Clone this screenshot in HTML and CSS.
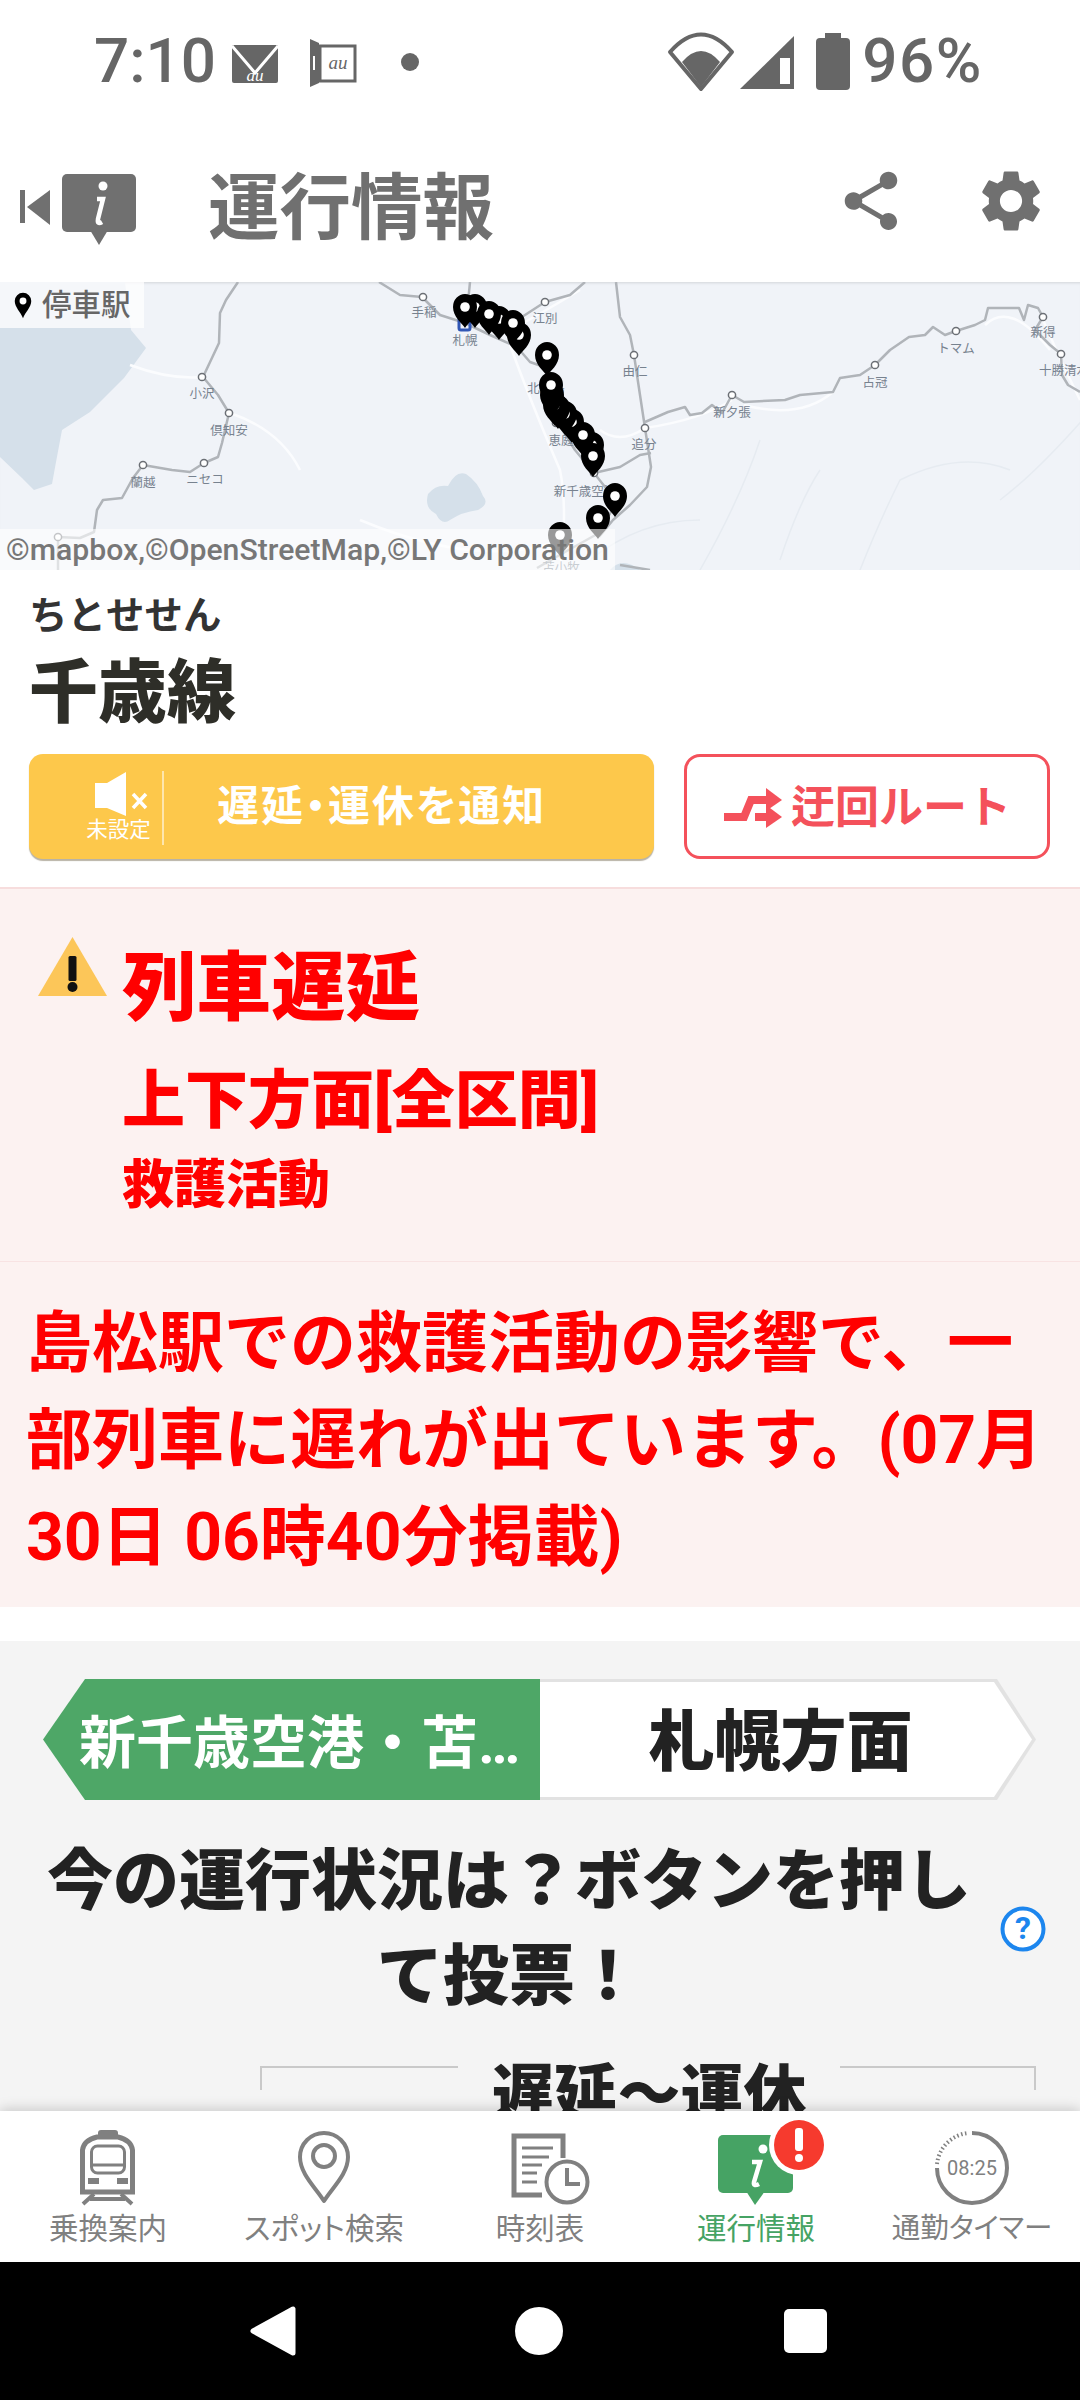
FILE: index.html
```html
<!DOCTYPE html>
<html lang="ja">
<head>
<meta charset="utf-8">
<title>運行情報</title>
<link rel="stylesheet" href="styles.css">
</head>
<body>
<div class="page">
  <div class="status">
    <span class="time">7:10</span>
    <svg class="st-mail" viewBox="233 45 46 38"><rect x="233" y="45" width="46" height="38" rx="2" fill="#666"/><path d="M233 46L256 73L279 46" fill="none" stroke="#fff" stroke-width="3"/><text x="256" y="81" class="au-w" text-anchor="middle">au</text></svg>
    <svg class="st-dev" viewBox="311 38 48 50"><path d="M311 39L320 43V83L311 87Z" fill="#666"/><rect x="321" y="46" width="35" height="35" fill="#fff" stroke="#666" stroke-width="3"/><rect x="314" y="56" width="2" height="14" fill="#fff"/><text x="339" y="69" class="au-g" text-anchor="middle">au</text></svg>
    <span class="st-dot"></span>
    <span class="st-spacer"></span>
    <svg class="st-wifi" viewBox="667 32 68 60"><path d="M670 52Q701 17 732 52L701 89Z" fill="#fff" stroke="#666" stroke-width="4" stroke-linejoin="round"/><path d="M682 62Q701 40 720 62L701 87Z" fill="#666"/></svg>
    <svg class="st-sig" viewBox="740 36 54 54"><path d="M740 89L794 36V89Z" fill="#666"/><rect x="780" y="58" width="10" height="26" fill="#fff"/></svg>
    <svg class="st-bat" viewBox="816 33 34 58"><rect x="825" y="33" width="16" height="8" fill="#666"/><rect x="816" y="38" width="34" height="52" rx="4" fill="#666"/></svg>
    <span class="pct">96%</span>
  </div>

  <header class="appbar">
    <svg class="ab-logo" viewBox="18 168 120 74"><rect x="20" y="186" width="5" height="33" fill="#707070"/><path d="M27 203L50 186V221Z" fill="#707070"/><rect x="62" y="170" width="74" height="58" rx="5" fill="#707070"/><path d="M90 226H108L99 241Z" fill="#707070"/><circle cx="103" cy="182" r="4.5" fill="#fff"/><path d="M97 195H103L98 215Q97 221 102 218" fill="none" stroke="#fff" stroke-width="4.5"/></svg>
    <h1 class="ab-title">運行情報</h1>
    <svg class="ab-share" viewBox="0 0 24 24"><path fill="#707070" d="M18 16.08c-.76 0-1.44.3-1.96.77L8.91 12.7c.05-.23.09-.46.09-.7s-.04-.47-.09-.7l7.05-4.11c.54.5 1.25.81 2.04.81 1.66 0 3-1.34 3-3s-1.34-3-3-3-3 1.34-3 3c0 .24.04.47.09.7L8.04 9.81C7.5 9.31 6.79 9 6 9c-1.66 0-3 1.34-3 3s1.34 3 3 3c.79 0 1.5-.31 2.04-.81l7.12 4.16c-.05.21-.08.43-.08.65 0 1.61 1.31 2.92 2.92 2.92s2.92-1.31 2.92-2.92-1.31-2.92-2.92-2.92z"/></svg>
    <svg class="ab-gear" viewBox="0 0 24 24"><path fill="#707070" d="M19.14,12.94c.04-.3.06-.61.06-.94 0-.32-.02-.64-.07-.94l2.03-1.58c.18-.14.23-.41.12-.61l-1.92-3.32c-.12-.22-.37-.29-.59-.22l-2.39.96c-.5-.38-1.03-.7-1.62-.94l-.36-2.54c-.04-.24-.24-.41-.48-.41h-3.84c-.24 0-.43.17-.47.41l-.36 2.54c-.59.24-1.13.57-1.62.94l-2.39-.96c-.22-.08-.47 0-.59.22L2.74 8.87c-.12.21-.08.47.12.61l2.03 1.58c-.05.3-.09.63-.09.94s.02.64.07.94l-2.03 1.58c-.18.14-.23.41-.12.61l1.92 3.32c.12.22.37.29.59.22l2.39-.96c.5.38 1.03.7 1.62.94l.36 2.54c.05.24.24.41.48.41h3.84c.24 0 .44-.17.47-.41l.36-2.54c.59-.24 1.13-.56 1.62-.94l2.39.96c.22.08.47 0 .59-.22l1.92-3.32c.12-.22.07-.47-.12-.61l-2.01-1.58zM12 15.6c-1.98 0-3.6-1.62-3.6-3.6s1.62-3.6 3.6-3.6 3.6 1.62 3.6 3.6-1.62 3.6-3.6 3.6z"/></svg>
  </header>

  <section class="map">
    <svg class="map-svg" viewBox="0 282 1080 288">
      <defs>
        <g id="pin"><path d="M0 21C-3 16-12 10-12 0A12 13 0 1 1 12 0C12 10 3 16 0 21Z" fill="#000"/><circle r="4.800" fill="#fff"/></g>
      </defs>
      <path class="water" d="M0 282V457L22 478L34 490L52 484L56 462L62 430L90 412L124 378L146 348L131 330L125 282Z"/>
      <path class="water" d="M428 494Q436 484 448 486Q456 470 466 474Q478 482 483 496Q490 504 478 510Q462 512 450 520Q442 526 436 514Q424 508 428 494Z"/>
      <path class="water" d="M610 570Q622 556 640 570Z"/>
      <path class="road" d="M130 365Q170 380 203 377M230 413Q280 430 300 470M510 345Q530 400 560 470Q568 510 560 570M600 430Q620 445 645 428M645 428Q700 420 732 400M744 405Q800 420 833 392M985 325Q1010 300 1050 350M1043 320Q1060 360 1080 400M580 290Q530 320 510 330M360 520Q480 570 560 540"/>
      <path class="lane" d="M590 560Q640 520 700 520M760 440Q740 500 700 570M1100 400Q1040 470 1000 500M780 560Q800 500 820 470M860 570Q880 520 900 480Q960 450 1010 470"/>
      <g class="rails">
        <path d="M238 282L226 300L220 313L219 343L203 377L218 395L229 413L222 443L218 457L204 463L190 472L172 470L143 465L133 478L122 498L103 500L97 510L94 532L80 538L58 537L58 570"/>
        <path d="M379 282L400 295L422 297L440 315L465 323L490 335L517 347L530 362L547 368L552 395L558 423L575 450L594 473L613 497L612 510L599 533L565 552L537 568"/>
        <path d="M585 282L570 295L545 302L525 315L496 333"/>
        <path d="M470 282L466 323"/>
        <path d="M616 282L620 317L630 335L634 355L640 395L645 428L651 467L647 487L630 505L613 520L599 537"/>
        <path d="M594 473L620 467L640 455L651 453"/>
        <path d="M645 422L668 412L685 407L690 415L702 413L712 405L722 413L732 395L744 402L785 400L800 395L833 392L840 378L860 375L875 365L890 350L909 337L925 335L933 327L945 335L956 331L975 325L985 320L988 308L1019 308L1024 320L1028 305L1038 308L1043 317L1035 330L1050 345L1061 354L1062 375L1068 385L1080 392"/>
        <path d="M620 565L650 570"/>
      </g>
      <g class="stn">
        <circle cx="423" cy="297" r="3.6"/><circle cx="545" cy="302" r="3.6"/><circle cx="634" cy="355" r="3.6"/><circle cx="202" cy="377" r="3.6"/><circle cx="229" cy="413" r="3.6"/><circle cx="204" cy="463" r="3.6"/><circle cx="143" cy="465" r="3.6"/><circle cx="645" cy="428" r="3.6"/><circle cx="732" cy="395" r="3.6"/><circle cx="875" cy="365" r="3.6"/><circle cx="956" cy="331" r="3.6"/><circle cx="1043" cy="317" r="3.6"/><circle cx="1061" cy="354" r="3.6"/><circle cx="594" cy="473" r="3.6"/><circle cx="556" cy="423" r="3.6"/><circle cx="58" cy="537" r="3.6"/>
      </g>
      <rect x="459" y="318" width="11" height="12" rx="2" class="sap"/>
      <g class="lbl" text-anchor="middle">
        <text x="424" y="317">手稲</text><text x="465" y="345">札幌</text><text x="545" y="323">江別</text><text x="635" y="376">由仁</text><text x="202" y="398">小沢</text><text x="229" y="435">倶知安</text><text x="143" y="487">蘭越</text><text x="205" y="484">ニセコ</text><text x="546" y="393">北広島</text><text x="561" y="445">恵庭</text><text x="644" y="449">追分</text><text x="732" y="417">新夕張</text><text x="875" y="387">占冠</text><text x="956" y="353">トマム</text><text x="1043" y="337">新得</text><text x="1064" y="375">十勝清水</text><text x="585" y="496">新千歳空港</text><text x="561" y="572">苫小牧</text>
      </g>
      <use href="#pin" x="475" y="307"/><use href="#pin" x="465" y="307"/><use href="#pin" x="499" y="319"/><use href="#pin" x="489" y="314"/><use href="#pin" x="519" y="335"/><use href="#pin" x="513" y="323"/><use href="#pin" x="547" y="355"/><use href="#pin" x="592" y="445"/><use href="#pin" x="572" y="422"/><use href="#pin" x="565" y="414"/><use href="#pin" x="558" y="408"/><use href="#pin" x="555" y="405"/><use href="#pin" x="552" y="395"/><use href="#pin" x="551" y="385"/><use href="#pin" x="583" y="435"/><use href="#pin" x="593" y="456"/><use href="#pin" x="615" y="496"/><use href="#pin" x="598" y="518"/><use href="#pin" x="560" y="535"/>
    </svg>
    <div class="legend">
      <svg class="legend-pin" viewBox="-12 -12 24 36"><path d="M0 23C-3 15-11 8-11 0A11 11 0 1 1 11 0C11 8 3 15 0 23Z" fill="#000"/><circle r="4.6" fill="#fff"/></svg>
      <span>停車駅</span>
    </div>
    <div class="attr">©mapbox,©OpenStreetMap,©LY Corporation</div>
  </section>

  <section class="line-info">
    <div class="kana">ちとせせん</div>
    <div class="line-name">千歳線</div>
    <div class="actions">
      <button class="notify">
        <span class="mute">
          <svg class="mute-ic" viewBox="90 768 60 46"><path d="M94 780H106L125 769V813L106 805H94Z" fill="#fff"/><path d="M132 791L145 805M145 791L132 805" stroke="#fff" stroke-width="3.5"/></svg>
          <span class="mute-txt">未設定</span>
        </span>
        <span class="notify-txt">遅延・運休を通知</span>
      </button>
      <button class="route">
        <svg class="route-ic" viewBox="722 788 60 42"><path d="M723 819H743L750 802H768" fill="none" stroke="#f4515b" stroke-width="8"/><path d="M765 790L781 802L765 813Z" fill="#f4515b"/><path d="M754 819H768" fill="none" stroke="#f4515b" stroke-width="8"/><path d="M765 807L781 819L765 830Z" fill="#f4515b"/></svg>
        <span class="route-txt">迂回ルート</span>
      </button>
    </div>
  </section>

  <section class="alert">
    <div class="alert-head">
      <svg class="warn" viewBox="38 938 70 60"><path d="M72.500 938L107 997H38Z" fill="#fcc659"/><rect x="68.500" y="957" width="8" height="25" rx="1.500" fill="#111"/><circle cx="72.500" cy="988" r="5" fill="#111"/></svg>
      <div class="alert-titles">
        <div class="a-title">列車遅延</div>
        <div class="a-sub">上下方面[全区間]</div>
        <div class="a-cause">救護活動</div>
      </div>
    </div>
    <p class="alert-body">島松駅での救護活動の影響で、一部列車に遅れが出ています。(07月30日 06時40分掲載)</p>
  </section>

  <section class="vote">
    <div class="dir-tabs">
      <div class="dir dir-on"><span class="dir-on-txt">新千歳空港・苫小牧方面</span></div>
      <div class="dir dir-off"><div class="dir-off-in">札幌方面</div></div>
    </div>
    <div class="vote-q">
      <h2 class="vote-h">今の運行状況は？ボタンを押して投票！</h2>
      <svg class="help" viewBox="0 0 46 46"><circle cx="23" cy="23" r="20.500" fill="#fff" stroke="#1c86ee" stroke-width="4"/><text x="23" y="33" class="help-t" text-anchor="middle">?</text></svg>
    </div>
    <div class="bracket">
      <div class="bracket-t">遅延～運休</div>
    </div>
  </section>

  <nav class="tabs">
    <div class="tab">
      <svg class="tab-ic" viewBox="38 2128 140 80"><rect x="98" y="2130" width="20" height="8" rx="3" fill="#808080"/><path d="M82.500 2150Q84 2140 97 2137H118Q131 2140 132.500 2150V2192H82.500Z" fill="#fff" stroke="#808080" stroke-width="5"/><rect x="91.500" y="2146" width="33" height="27" rx="6" fill="#fff" stroke="#808080" stroke-width="3"/><path d="M91 2165H125" stroke="#808080" stroke-width="3" fill="none"/><rect x="88" y="2178" width="11" height="6" fill="#808080"/><rect x="117" y="2178" width="11" height="6" fill="#808080"/><path d="M94 2194L83 2204M121 2194L132 2204M90 2199H125" stroke="#808080" stroke-width="4" fill="none"/></svg>
      <span class="tab-l">乗換案内</span>
    </div>
    <div class="tab">
      <svg class="tab-ic" viewBox="254 2128 140 80"><path d="M324 2201C316 2188 300 2174 300 2157A24 24 0 1 1 348 2157C348 2174 332 2188 324 2201Z" fill="none" stroke="#808080" stroke-width="4" stroke-linejoin="round"/><circle cx="324" cy="2156" r="11" fill="none" stroke="#808080" stroke-width="4"/></svg>
      <span class="tab-l">スポット検索</span>
    </div>
    <div class="tab">
      <svg class="tab-ic" viewBox="470 2128 140 80"><path d="M563 2158V2136H514V2195H542" fill="none" stroke="#808080" stroke-width="5"/><path d="M522 2148H553M522 2157H549M522 2165H542M522 2173H537M522 2182H537" stroke="#808080" stroke-width="3" fill="none"/><circle cx="567" cy="2182" r="20.500" fill="#fff" stroke="#808080" stroke-width="4"/><path d="M567 2168V2184H580" fill="none" stroke="#808080" stroke-width="4"/></svg>
      <span class="tab-l">時刻表</span>
    </div>
    <div class="tab">
      <svg class="tab-ic" viewBox="686 2128 140 80"><rect x="718" y="2135" width="75" height="58" rx="5" fill="#46a364"/><path d="M746 2191H765L755 2205Z" fill="#46a364"/><circle cx="763" cy="2149" r="4.500" fill="#fff"/><path d="M752 2162H760L754 2182Q753 2187 759 2184" fill="none" stroke="#fff" stroke-width="4.500"/><circle cx="799" cy="2145" r="30" fill="#fff"/><circle cx="799" cy="2145" r="25" fill="#f63a2e"/><rect x="795" y="2128" width="8" height="23" rx="3" fill="#fff"/><circle cx="799" cy="2158" r="4" fill="#fff"/></svg>
      <span class="tab-l tab-on">運行情報</span>
    </div>
    <div class="tab">
      <svg class="tab-ic" viewBox="902 2128 140 80"><path d="M972 2133A35 35 0 1 1 937 2168" fill="none" stroke="#808080" stroke-width="4"/><path d="M937 2164A35 35 0 0 1 968 2133" fill="none" stroke="#808080" stroke-width="4" stroke-dasharray="1.500 2.500"/><text x="972" y="2175" class="tm" text-anchor="middle">08:25</text></svg>
      <span class="tab-l tab-narrow">通勤タイマー</span>
    </div>
  </nav>

  <div class="sysnav">
    <svg class="sn-back" viewBox="250 2306 46 50"><path d="M293 2309V2353L253 2331Z" fill="#fff" stroke="#fff" stroke-width="5" stroke-linejoin="round"/></svg>
    <span class="sn-home"></span>
    <span class="sn-rec"></span>
  </div>
</div>
</body>
</html>
```

FILE: styles.css
```css
* { box-sizing: border-box; }
html, body { margin: 0; padding: 0; background: #fff; }
body { font-family: Roboto, "Noto Sans CJK JP", sans-serif; }
.page { width: 1080px; height: 2400px; display: flex; flex-direction: column; overflow: hidden; }
h1, h2, p { margin: 0; }

/* status bar */
.status { height: 135px; flex: none; display: flex; align-items: flex-start; padding: 0 97px 0 94px; color: #666; }
.time { font-size: 62px; font-weight: 500; line-height: 70px; margin-top: 26px; margin-right: 16px; }
.pct { font-size: 62px; font-weight: 500; line-height: 70px; margin-top: 26px; margin-left: 12px; letter-spacing: 1.500px; }
.st-mail { width: 46px; height: 38px; margin-top: 45px; }
.st-dev { width: 48px; height: 50px; margin: 38px 0 0 32px; }
.st-dot { width: 18px; height: 18px; border-radius: 50%; background: #666; margin: 53px 0 0 43px; }
.st-spacer { flex: 1; }
.st-wifi { width: 68px; height: 60px; margin-top: 32px; }
.st-sig { width: 54px; height: 54px; margin: 36px 0 0 5px; }
.st-bat { width: 34px; height: 58px; margin: 33px 0 0 22px; }
.au-w { font: italic 17px "Liberation Serif", serif; fill: #fff; }
.au-g { font: italic 19px "Liberation Serif", serif; fill: #666; }

/* app bar */
.appbar { height: 147px; flex: none; display: flex; align-items: center; padding: 0 0 0 18px; position: relative; z-index: 2; }
.ab-logo { width: 120px; height: 74px; margin-top: 1px; }
.ab-title { font-size: 71.500px; font-weight: 700; color: #707070; line-height: 90px; margin: 0 0 0 70px; flex: 1; }
.ab-share { width: 70px; height: 70px; margin: 0 68px 15px 0; }
.ab-gear { width: 74px; height: 74px; margin: 0 32px 15px 0; }

/* map */
.map { height: 288px; flex: none; position: relative; overflow: hidden; background: #f0f3f8; box-shadow: inset 0 3px 3px -2px rgba(0,0,0,.12); }
.map-svg { display: block; width: 1080px; height: 288px; }
.water { fill: #d5e0ea; }
.road { fill: none; stroke: #fbfcfe; stroke-width: 2.500; }
.lane { fill: none; stroke: #e6ebf1; stroke-width: 1.500; }
.rails path { fill: none; stroke: #b0b4b9; stroke-width: 2.500; stroke-linejoin: round; }
.stn circle { fill: #fff; stroke: #6b6f75; stroke-width: 1.500; }
.sap { fill: none; stroke: #3157b5; stroke-width: 3; }
.lbl text { font-size: 12.500px; fill: #77828f; font-family: "Noto Sans CJK JP", sans-serif; }
.legend { position: absolute; left: 0; top: 0; width: 144px; height: 46px; background: rgba(255,255,255,.75); display: flex; align-items: center; padding-left: 14px; gap: 10px; font-size: 29.500px; font-weight: 500; line-height: 46px; color: #666; }
.legend-pin { width: 18px; height: 27px; }
.attr { position: absolute; left: 0; right: 465px; bottom: 0; height: 41px; background: rgba(255,255,255,.6); color: #777; font-size: 30.200px; font-weight: 500; line-height: 41px; padding-left: 6px; white-space: nowrap; }

/* line info */
.line-info { flex: none; padding: 21px 30px 28px 29px; }
.kana { font-size: 38.500px; line-height: 50px; font-weight: 700; color: #333; }
.line-name { font-size: 69px; line-height: 80px; font-weight: 900; color: #2e2e28; margin-top: 13px; margin-bottom: 20px; }
.actions { display: flex; justify-content: space-between; }
.notify { width: 625px; height: 105px; border: 0; border-radius: 14px; background: #fdc84b; box-shadow: 0 2px 1px #b9b3a6; display: flex; align-items: center; padding: 0; color: #fff; font-family: inherit; }
.mute { width: 135px; height: 74px; margin-top: 2px; border-right: 2px solid rgba(255,255,255,.55); display: flex; flex-direction: column; align-items: center; padding-left: 46px; }
.mute-ic { width: 60px; height: 46px; margin-left: 4px; flex: none; }
.mute-txt { font-size: 21.500px; line-height: 26px; color: #fff; white-space: nowrap; }
.notify-txt { font-size: 42px; font-weight: 700; margin-left: 53px; line-height: 50px; font-feature-settings: "palt"; letter-spacing: 2px; }
.route { width: 366px; height: 105px; border: 3px solid #f4515b; border-radius: 16px; background: #fff; display: flex; align-items: center; justify-content: center; gap: 8px; padding: 0; color: #f4515b; font-family: inherit; font-size: 44px; font-weight: 700; }
.route-ic { width: 60px; height: 42px; }
.route-txt { margin-bottom: 6px; }

/* alert */
.alert { flex: none; background: #fcf2f1; border-top: 2px solid #f7dddd; color: #f00; height: 720px; }
.alert-head { display: flex; padding: 48px 0 46px 38px; border-bottom: 1px solid #f8e3e3; height: 373px; }
.warn { width: 70px; height: 60px; flex: none; }
.alert-titles { margin-left: 14px; margin-top: 13px; }
.a-title { font-size: 74.500px; line-height: 78px; font-weight: 900; }
.a-sub { font-size: 63px; line-height: 72px; font-weight: 900; margin-top: 37px; }
.a-cause { font-size: 52px; line-height: 60px; font-weight: 900; margin-top: 19px; }
.alert-body { font-size: 66px; line-height: 97px; font-weight: 700; padding: 33px 26px 0; }

/* vote */
.vote { flex: 1; min-height: 0; margin-top: 34px; background: #f4f4f4; overflow: hidden; padding-top: 38px; }
.dir-tabs { display: flex; margin-left: 43px; width: 993px; height: 121px; }
.dir { height: 121px; }
.dir-on { width: 497px; background: #4ea767; clip-path: polygon(42px 0, 100% 0, 100% 100%, 42px 100%, 0 50%); color: #fff; padding: 0 0 0 36px; font-size: 57px; font-weight: 700; line-height: 130px; }
.dir-on-txt { display: block; width: 448px; overflow: hidden; white-space: nowrap; text-overflow: ellipsis; }
.dir-off { width: 496px; background: #e2e2e2; clip-path: polygon(0 0, 457px 0, 100% 50%, 457px 100%, 0 100%); padding: 3px 4px 3px 0; }
.dir-off-in { height: 115px; background: #fff; clip-path: polygon(0 0, 454px 0, 100% 50%, 454px 100%, 0 100%); font-size: 66px; font-weight: 900; color: #222; line-height: 122px; text-align: center; padding-right: 11px; }
.vote-q { display: flex; align-items: center; margin-top: 34px; padding-left: 24px; }
.vote-h { width: 970px; font-size: 66px; line-height: 95px; font-weight: 900; color: #222; text-align: center; }
.help { width: 46px; height: 46px; margin-left: 6px; flex: none; }
.help-t { font: 700 32px Roboto, sans-serif; fill: #1c86ee; }
.bracket { position: relative; margin: 42px 0 0 260px; width: 776px; height: 24px; border: 2px solid #c9c9c9; border-bottom: 0; }
.bracket-t { position: absolute; left: 196px; top: -18px; width: 382px; text-align: center; background: #f4f4f4; font-size: 63px; line-height: 90px; font-weight: 900; color: #222; }

/* tab bar */
.tabs { height: 151px; flex: none; display: grid; grid-template-columns: repeat(5, 216px); background: #fff; position: relative; box-shadow: 0 -2px 12px rgba(0,0,0,.18); }
.tab { display: flex; flex-direction: column; align-items: center; padding-top: 17px; }
.tab-ic { width: 140px; height: 80px; overflow: visible; }
.tab-l { font-size: 29.500px; line-height: 34px; color: #808080; white-space: nowrap; margin-top: 4px; font-feature-settings: "palt"; }
.tab-on { color: #46a364; }
.tab-narrow { font-size: 28.500px; }
.tm { font: 400 20px Roboto, sans-serif; fill: #808080; }

/* system nav */
.sysnav { height: 138px; flex: none; background: #000; position: relative; display: flex; align-items: center; padding-bottom: 0; }
.sn-back { position: absolute; left: 250px; top: 44px; width: 46px; height: 50px; }
.sn-home { position: absolute; left: 515px; top: 45px; width: 48px; height: 48px; border-radius: 50%; background: #fff; }
.sn-rec { position: absolute; left: 784px; top: 47px; width: 43px; height: 44px; border-radius: 5px; background: #fff; }
```
